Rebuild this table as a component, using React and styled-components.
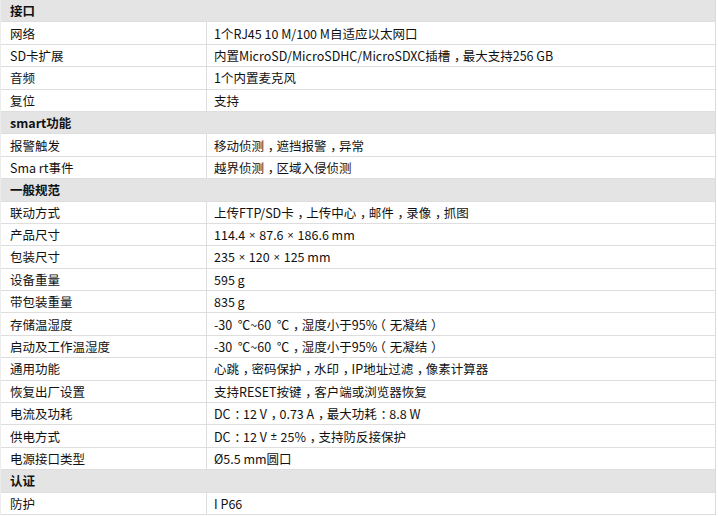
import React from 'react';
import styled, { createGlobalStyle } from 'styled-components';

const GlobalStyle = createGlobalStyle`
  body {
    margin: 0;
    background: #fff;
  }
`;

const specs = [
  {
    title: '接口',
    rows: [
      ['网络', '1个RJ45 10 M/100 M自适应以太网口'],
      ['SD卡扩展', '内置MicroSD/MicroSDHC/MicroSDXC插槽，最大支持256 GB'],
      ['音频', '1个内置麦克风'],
      ['复位', '支持'],
    ],
  },
  {
    title: 'smart功能',
    rows: [
      ['报警触发', '移动侦测，遮挡报警，异常'],
      ['Sma rt事件', '越界侦测，区域入侵侦测'],
    ],
  },
  {
    title: '一般规范',
    rows: [
      ['联动方式', '上传FTP/SD卡，上传中心，邮件，录像，抓图'],
      ['产品尺寸', '114.4 × 87.6 × 186.6 mm'],
      ['包装尺寸', '235 × 120 × 125 mm'],
      ['设备重量', '595 g'],
      ['带包装重量', '835 g'],
      ['存储温湿度', '-30  ℃~60  ℃，湿度小于95%（无凝结）'],
      ['启动及工作温湿度', '-30  ℃~60  ℃，湿度小于95%（无凝结）'],
      ['通用功能', '心跳，密码保护，水印，IP地址过滤，像素计算器'],
      ['恢复出厂设置', '支持RESET按键，客户端或浏览器恢复'],
      ['电流及功耗', 'DC：12 V，0.73 A，最大功耗：8.8 W'],
      ['供电方式', 'DC：12 V ± 25%，支持防反接保护'],
      ['电源接口类型', 'Ø5.5 mm圆口'],
    ],
  },
  {
    title: '认证',
    rows: [['防护', 'I P66']],
  },
];

const PAD = { '，': [0.3, 0.2], '：': [0.3, 0.2], '（': [0.2, 0.3], '）': [0.3, 0.2] };
const SPLIT = /([，：（）×±])/;

function SpecText({ text }) {
  return text.split(SPLIT).map((part, i) => {
    if (part in PAD) {
      const [l, r] = PAD[part];
      return <Punct key={i} $l={l} $r={r}>{part}</Punct>;
    }
    if (part === '×' || part === '±') return <Sym key={i}>{part}</Sym>;
    return <React.Fragment key={i}>{part}</React.Fragment>;
  });
}

function App() {
  return (
    <>
      <GlobalStyle />
      <Table>
        {specs.map(section => (
          <React.Fragment key={section.title}>
            <SectionRow>{section.title}</SectionRow>
            {section.rows.map(([label, value]) => (
              <Row key={label}>
                <Label>{label}</Label>
                <Value>
                  <SpecText text={value} />
                </Value>
              </Row>
            ))}
          </React.Fragment>
        ))}
      </Table>
    </>
  );
}

const Table = styled.div`
  width: 716px;
  box-sizing: border-box;
  border-right: 1px solid #dadada;
  border-left: 1px solid #ececec;
  display: flex;
  flex-direction: column;
  font-family: "Noto Sans CJK SC", sans-serif;
  font-size: 12.5px;
  color: #111;
`;

const SectionRow = styled.div`
  height: 22.4px;
  box-sizing: border-box;
  display: flex;
  align-items: center;
  padding-left: 9px;
  background: #e4e4e4;
  border-bottom: 1px solid #dedede;
  font-weight: bold;
`;

const Row = styled.div`
  height: 22.4px;
  box-sizing: border-box;
  display: flex;
  border-bottom: 1px solid #dedede;
`;

const Label = styled.div`
  width: 206px;
  box-sizing: border-box;
  display: flex;
  align-items: center;
  padding-left: 9px;
  border-right: 1px solid #dedede;
`;

const Value = styled.div`
  flex: 1;
  display: flex;
  align-items: center;
  padding-left: 7px;
  white-space: pre;
`;

const Punct = styled.span`
  font-feature-settings: "halt";
  padding: 0 ${p => p.$r}em 0 ${p => p.$l}em;
`;

const Sym = styled.span`
  font-family: "Liberation Sans", sans-serif;
  font-size: 11px;
  padding: 0 1px;
`;

export default App;
